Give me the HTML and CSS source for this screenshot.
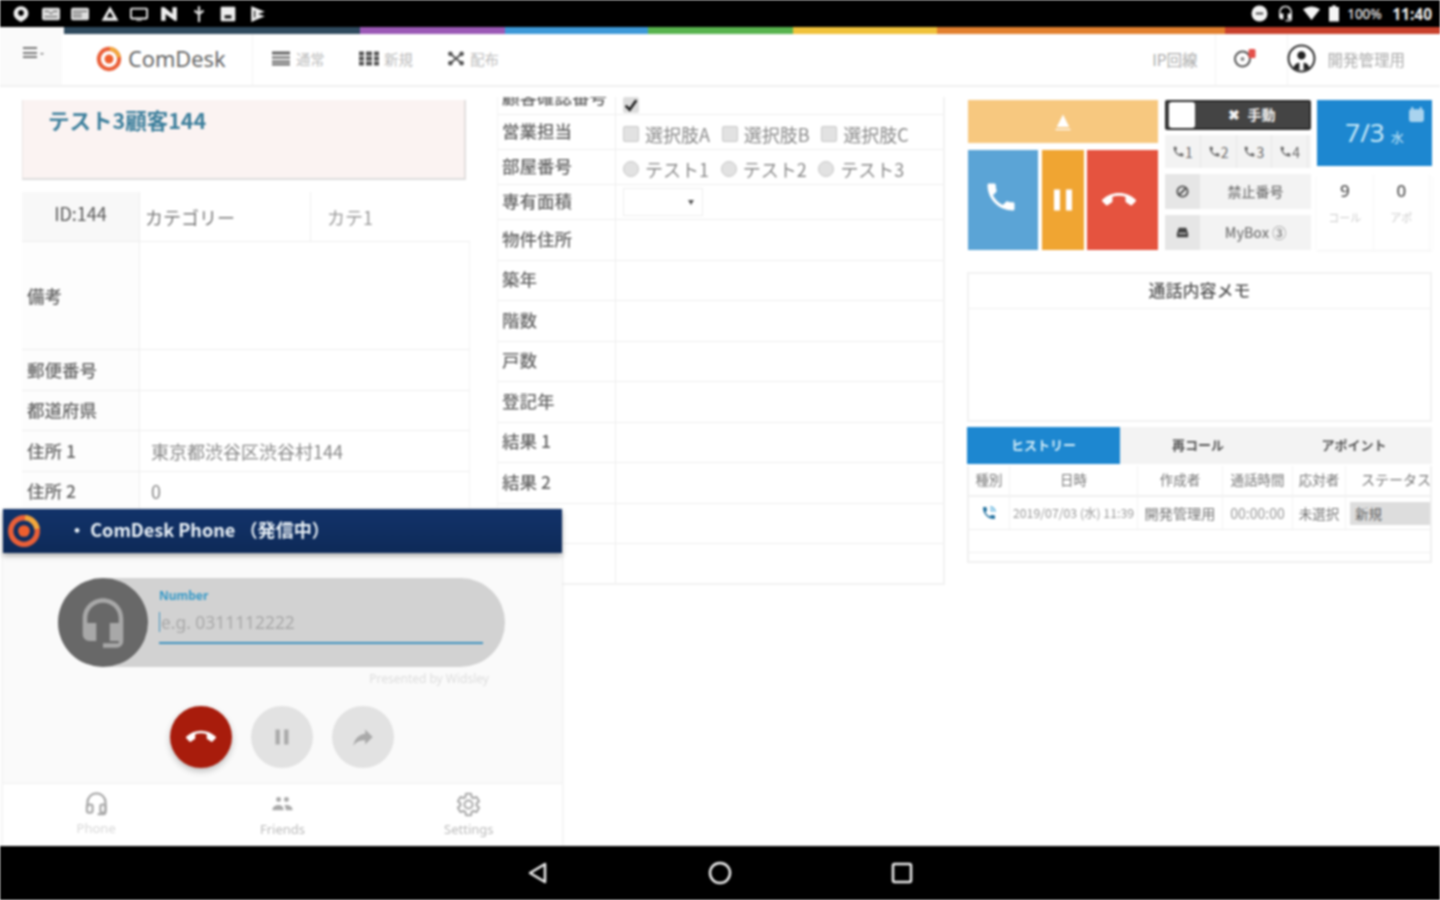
FILE: index.html
```html
<!DOCTYPE html>
<html lang="ja">
<head>
<meta charset="utf-8">
<title>ComDesk</title>
<link rel="stylesheet" href="styles.css">
</head>
<body>
<svg class="defs" width="0" height="0" aria-hidden="true">
  <symbol id="i-call" viewBox="0 0 24 24"><path d="M6.62 10.79c1.44 2.83 3.76 5.14 6.59 6.59l2.2-2.2c.27-.27.67-.36 1.02-.24 1.12.37 2.33.57 3.57.57.55 0 1 .45 1 1V20c0 .55-.45 1-1 1-9.39 0-17-7.61-17-17 0-.55.45-1 1-1h3.5c.55 0 1 .45 1 1 0 1.25.2 2.45.57 3.57.11.35.03.74-.25 1.02l-2.2 2.2z"/></symbol>
  <symbol id="i-end" viewBox="0 0 24 24"><path d="M12 9c-1.6 0-3.15.25-4.6.72v3.1c0 .39-.23.74-.56.9-.98.49-1.87 1.12-2.66 1.85-.18.18-.43.28-.7.28-.28 0-.53-.11-.71-.29L.29 13.08c-.18-.17-.29-.42-.29-.7 0-.28.11-.53.29-.71C3.34 8.78 7.46 7 12 7s8.66 1.78 11.71 4.67c.18.18.29.43.29.71 0 .28-.11.53-.29.71l-2.48 2.48c-.18.18-.43.29-.71.29-.27 0-.52-.11-.7-.28-.79-.74-1.69-1.36-2.67-1.85-.33-.16-.56-.5-.56-.9v-3.1C15.15 9.25 13.6 9 12 9z"/></symbol>
  <symbol id="i-headset" viewBox="0 0 24 24"><path d="M12 1c-4.97 0-9 4.03-9 9v7c0 1.66 1.34 3 3 3h3v-8H5v-2c0-3.87 3.13-7 7-7s7 3.13 7 7v2h-4v8h4v1h-7v2h6c1.66 0 3-1.34 3-3V10c0-4.97-4.03-9-9-9z"/></symbol>
  <symbol id="i-headset-o" viewBox="0 0 24 24"><path d="M4 15v-4a8 8 0 0 1 16 0v8c0 1.500-1 2.500-2.500 2.500H13" fill="none" stroke-width="2"/><rect x="3.500" y="13" width="5" height="7" rx="1.500" fill="none" stroke-width="2"/><rect x="15.500" y="13" width="4.500" height="7" rx="1.500" fill="none" stroke-width="2"/></symbol>
  <symbol id="i-people" viewBox="0 0 24 24"><circle cx="8.500" cy="7.500" r="2.200"/><circle cx="15.500" cy="7.500" r="2.200"/><path d="M3 17c0-3 3-4.500 5.500-4.500S13 14 13 17zM15 17c0-2-.6-3.300-1.500-4.200.7-.2 1.400-.3 2-.3 2.500 0 5.500 1.500 5.500 4.500z"/></symbol>
  <symbol id="i-gear" viewBox="0 0 24 24"><path d="M19.140 12.940c.04-.3.06-.61.06-.94 0-.32-.02-.64-.07-.94l2.030-1.580c.18-.14.23-.41.12-.61l-1.920-3.320c-.12-.22-.37-.29-.59-.22l-2.390.96c-.5-.38-1.030-.7-1.620-.94l-.36-2.540c-.04-.24-.24-.41-.48-.41h-3.840c-.24 0-.43.17-.47.41l-.36 2.540c-.59.24-1.130.57-1.620.94l-2.390-.96c-.22-.08-.47 0-.59.22L2.740 8.870c-.12.21-.08.47.12.61l2.030 1.580c-.05.3-.09.63-.09.94s.02.64.07.94l-2.030 1.580c-.18.14-.23.41-.12.61l1.920 3.320c.12.22.37.29.59.22l2.390-.96c.5.38 1.030.7 1.620.94l.36 2.540c.05.24.24.41.48.41h3.840c.24 0 .44-.17.47-.41l.36-2.540c.59-.24 1.130-.56 1.620-.94l2.390.96c.22.08.47 0 .59-.22l1.920-3.320c.12-.22.07-.47-.12-.61l-2.010-1.580zM12 15.600c-1.980 0-3.600-1.620-3.600-3.600s1.620-3.600 3.600-3.600 3.600 1.620 3.600 3.600-1.620 3.600-3.600 3.600z"/></symbol>
  <symbol id="i-forward" viewBox="0 0 24 24"><path d="M14 9V5l7 7-7 7v-4.100c-5 0-8.500 1.600-11 5.100 1-5 4-10 11-11z"/></symbol>
  <symbol id="i-pause" viewBox="0 0 24 24"><path d="M6 5h4v14H6zM14 5h4v14h-4z"/></symbol>
  <symbol id="i-logo" viewBox="0 0 32 32"><circle cx="16" cy="16" r="12.500" fill="none" stroke="#ea5f38" stroke-width="5"/><path d="M17 3.500a12.500 12.500 0 0 1 11.300 10.500" fill="none" stroke="#f2a83c" stroke-width="5"/><circle cx="16" cy="16" r="5.500" fill="#ee5f2e"/></symbol>
</svg>

<div class="screen">
  <header class="statusbar">
    <div class="status-left">
      <svg class="st" viewBox="0 0 16 16"><path d="M8 1a6.500 6.500 0 0 0-6.500 6.500C1.500 11 4 13 8 15c4-2 6.500-4 6.500-7.500A6.500 6.500 0 0 0 8 1z" fill="#eee"/><circle cx="8" cy="7" r="2.500" fill="#000"/></svg>
      <svg class="st" viewBox="0 0 20 16"><rect x="0" y="1" width="20" height="14" rx="2" fill="#ddd"/><path d="M3 5h4l3 3 3-3h4M3 11h14" stroke="#444" fill="none"/></svg>
      <svg class="st" viewBox="0 0 20 16"><rect x="0" y="1" width="20" height="14" rx="2" fill="#ddd"/><path d="M2 5h16M2 8h10M2 11h10" stroke="#444" fill="none"/></svg>
      <svg class="st" viewBox="0 0 16 16"><path d="M8 1l7.500 13H.5z" fill="#eee"/><path d="M8 6l3 5H5z" fill="#000"/></svg>
      <svg class="st" viewBox="0 0 20 16"><rect x="1" y="2" width="18" height="11" rx="1" fill="none" stroke="#eee" stroke-width="2"/><path d="M7 15h6" stroke="#eee"/></svg>
      <svg class="st" viewBox="0 0 16 16"><path d="M1 2h3l7 6V2h4v12h-2L5 8v6H1z" fill="#eee"/></svg>
      <svg class="st" viewBox="0 0 16 16"><path d="M8 1v14M4 5l4 3 4-3" stroke="#ddd" stroke-width="2" fill="none"/></svg>
      <svg class="st" viewBox="0 0 16 16"><rect x="1.500" y="1.500" width="13" height="13" rx="1" fill="#eee"/><rect x="5" y="9" width="6" height="3" fill="#222"/></svg>
      <svg class="st" viewBox="0 0 16 16"><path d="M2 1l12 5-6 2 6 2-12 5z" fill="#eee"/><path d="M5 5v6" stroke="#000"/></svg>
    </div>
    <div class="status-right">
      <svg class="st-r" viewBox="0 0 16 16"><circle cx="8" cy="8" r="7.500" fill="#f4f4f4"/><rect x="4.500" y="7" width="7" height="2" fill="#555"/></svg>
      <svg class="st-r" viewBox="0 0 24 24"><use href="#i-headset" fill="#f4f4f4"/></svg>
      <svg class="st-r" viewBox="0 0 16 16"><path d="M0 4q8-5 16 0L8 14z" fill="#f4f4f4"/></svg>
      <svg class="st-batt" viewBox="0 0 10 16"><path d="M3 0h4v1.500h3V16H0V1.500h3z" fill="#f4f4f4"/></svg>
      <span class="pct">100%</span>
      <span class="clock">11:40</span>
    </div>
  </header>

  <div class="rainbow">
    <i class="rb rb-blank"></i><i class="rb rb-navy"></i><i class="rb rb-purple"></i><i class="rb rb-blue"></i><i class="rb rb-green"></i><i class="rb rb-yellow"></i><i class="rb rb-orange"></i><i class="rb rb-red"></i>
  </div>

  <nav class="topnav">
    <div class="menu-btn"><span class="burger"></span><span class="caret"></span></div>
    <div class="brand">
      <svg class="brand-logo" viewBox="0 0 32 32"><use href="#i-logo"/></svg>
      <span class="brand-name">ComDesk</span>
    </div>
    <div class="nav-item nav-first">
      <svg class="nav-ic" viewBox="0 0 18 14"><path d="M0 0h18v3H0zM0 5h18v2H0zM0 9h18v2H0zM0 12h18v2H0z" fill="#666"/></svg><span>通常</span>
    </div>
    <div class="nav-item">
      <svg class="nav-ic nav-ic-wide" viewBox="0 0 20 14"><path d="M0 0h5v4H0zM7 0h6v4H7zM15 0h5v4h-5zM0 5h5v4H0zM7 5h6v4H7zM15 5h5v4h-5zM0 10h5v4H0zM7 10h6v4H7zM15 10h5v4h-5z" fill="#555"/></svg><span>新規</span>
    </div>
    <div class="nav-item">
      <svg class="nav-ic" viewBox="0 0 18 16"><path d="M3 3l12 10M15 3L3 13" stroke="#555" stroke-width="2"/><circle cx="3" cy="3" r="2.500" fill="#555"/><circle cx="15" cy="3" r="2.500" fill="#555"/><circle cx="3" cy="13" r="2.500" fill="#555"/><circle cx="15" cy="13" r="2.500" fill="#555"/></svg><span>配布</span>
    </div>
    <div class="nav-right">
      <div class="nav-cell nav-ip"><span>IP回線</span></div>
      <div class="nav-cell nav-bell">
        <svg class="bell" viewBox="0 0 24 20"><circle cx="9" cy="11" r="7.500" fill="none" stroke="#555" stroke-width="2"/><circle cx="9" cy="11" r="2" fill="#888"/><rect x="15" y="1" width="7" height="9" rx="1.500" fill="#e4504a"/></svg>
      </div>
      <div class="nav-user">
        <svg class="avatar" viewBox="0 0 28 28"><circle cx="14" cy="14" r="12.500" fill="#fff" stroke="#333" stroke-width="2"/><circle cx="14" cy="11" r="4" fill="#222"/><path d="M6 24c1-5 4-6 6-6v7zM22 24c-1-5-4-6-6-6v7z" fill="#222"/></svg>
        <span>開発管理用</span>
      </div>
    </div>
  </nav>

  <main class="content">
    <section class="col-left">
      <div class="customer-card"><h1>テスト3顧客144</h1></div>
      <div class="info-table">
        <div class="info-row row-id">
          <div class="cell-label cell-id">ID:144</div>
          <div class="cell-cat">カテゴリー</div>
          <div class="cell-val">カテ1</div>
        </div>
        <div class="info-row row-note"><div class="cell-label">備考</div><div class="cell-wide"></div></div>
        <div class="info-row"><div class="cell-label">郵便番号</div><div class="cell-wide"></div></div>
        <div class="info-row"><div class="cell-label">都道府県</div><div class="cell-wide"></div></div>
        <div class="info-row"><div class="cell-label">住所 1</div><div class="cell-wide cell-addr">東京都渋谷区渋谷村144</div></div>
        <div class="info-row"><div class="cell-label">住所 2</div><div class="cell-wide cell-addr">0</div></div>
      </div>
    </section>

    <section class="col-mid">
      <div class="form-clip">
        <div class="form-table">
          <div class="form-row row-a"><div class="form-label">顧客確認番号</div><div class="form-val"><span class="check"><svg viewBox="0 0 12 12"><path d="M2 6.500l3 3 5-7" stroke="#222" stroke-width="2" fill="none"/></svg></span></div></div>
          <div class="form-row row-b"><div class="form-label">営業担当</div><div class="form-val opts"><span class="opt"><i class="box"></i>選択肢A</span><span class="opt"><i class="box"></i>選択肢B</span><span class="opt"><i class="box"></i>選択肢C</span></div></div>
          <div class="form-row row-b"><div class="form-label">部屋番号</div><div class="form-val opts"><span class="opt"><i class="box radio"></i>テスト1</span><span class="opt"><i class="box radio"></i>テスト2</span><span class="opt"><i class="box radio"></i>テスト3</span></div></div>
          <div class="form-row row-b"><div class="form-label">専有面積</div><div class="form-val"><span class="select"><i class="arrow"></i></span></div></div>
          <div class="form-row"><div class="form-label">物件住所</div><div class="form-val"></div></div>
          <div class="form-row"><div class="form-label">築年</div><div class="form-val"></div></div>
          <div class="form-row"><div class="form-label">階数</div><div class="form-val"></div></div>
          <div class="form-row"><div class="form-label">戸数</div><div class="form-val"></div></div>
          <div class="form-row"><div class="form-label">登記年</div><div class="form-val"></div></div>
          <div class="form-row"><div class="form-label">結果 1</div><div class="form-val"></div></div>
          <div class="form-row"><div class="form-label">結果 2</div><div class="form-val"></div></div>
          <div class="form-row"><div class="form-label"></div><div class="form-val"></div></div>
          <div class="form-row"><div class="form-label"></div><div class="form-val"></div></div>
        </div>
      </div>
    </section>

    <section class="col-right">
      <div class="widgets">
        <div class="call-btns">
          <div class="btn-up"><svg viewBox="0 0 16 16"><path d="M8 2l5 10H3z" fill="#fff"/><path d="M2 14h12" stroke="#fff"/></svg></div>
          <div class="btn-row">
            <div class="btn-call"><svg viewBox="0 0 24 24"><use href="#i-call" fill="#fff"/></svg></div>
            <div class="btn-hold"><svg viewBox="0 0 24 24"><use href="#i-pause" fill="#fff"/></svg></div>
            <div class="btn-end"><svg viewBox="0 0 24 24"><use href="#i-end" fill="#fff"/></svg></div>
          </div>
        </div>
        <div class="ctl">
          <div class="toggle"><span class="toggle-knob"></span><span class="toggle-txt">✖ 手動</span></div>
          <div class="lines">
            <span><svg viewBox="0 0 24 24"><use href="#i-call"/></svg>1</span>
            <span><svg viewBox="0 0 24 24"><use href="#i-call"/></svg>2</span>
            <span><svg viewBox="0 0 24 24"><use href="#i-call"/></svg>3</span>
            <span><svg viewBox="0 0 24 24"><use href="#i-call"/></svg>4</span>
          </div>
          <div class="ctl-btn">
            <span class="ctl-ic"><svg viewBox="0 0 16 16"><circle cx="8" cy="8" r="5.500" fill="none" stroke="#555" stroke-width="2"/><path d="M4 12l8-8" stroke="#555" stroke-width="2"/></svg></span>
            <span class="ctl-txt">禁止番号</span>
          </div>
          <div class="ctl-btn">
            <span class="ctl-ic"><svg viewBox="0 0 16 16"><path d="M2 9l2-6h8l2 6v4H2z" fill="#444"/><path d="M4 9h8" stroke="#fff"/></svg></span>
            <span class="ctl-txt">MyBox ③</span>
          </div>
        </div>
        <div class="stats">
          <div class="date-box">
            <svg class="cal" viewBox="0 0 16 16"><rect x="1" y="3" width="14" height="12" rx="2" fill="#a9d3ee"/><path d="M4 1v3M12 1v3" stroke="#a9d3ee" stroke-width="2"/></svg>
            <span class="date">7/3</span><span class="dow">水</span>
          </div>
          <div class="counts">
            <div class="count"><b>9</b><small>コール</small></div>
            <div class="count"><b>0</b><small>アポ</small></div>
          </div>
        </div>
      </div>

      <div class="memo">
        <div class="memo-head">通話内容メモ</div>
        <div class="memo-body"></div>
      </div>

      <div class="tabs">
        <div class="tab tab-on">ヒストリー</div>
        <div class="tab">再コール</div>
        <div class="tab">アポイント</div>
      </div>
      <div class="history">
        <div class="h-row h-head">
          <span>種別</span><span>日時</span><span>作成者</span><span>通話時間</span><span>応対者</span><span class="h-last">ステータス</span>
        </div>
        <div class="h-row h-data">
          <span><svg class="h-ic" viewBox="0 0 24 24"><use href="#i-call"/><path d="M14 3a7 7 0 0 1 7 7M14 7a3 3 0 0 1 3 3" fill="none" stroke="#3aa0d6" stroke-width="2"/></svg></span><span class="h-date">2019/07/03 (水) 11:39</span><span class="h-name">開発管理用</span><span class="h-time">00:00:00</span><span>未選択</span><span class="h-status"><em>新規</em></span>
        </div>
        <div class="h-empty"></div>
      </div>
    </section>

    <aside class="phone">
      <div class="phone-head">
        <svg class="phone-logo" viewBox="0 0 32 32"><use href="#i-logo"/></svg>
        <span class="phone-title">・ ComDesk Phone （発信中）</span>
      </div>
      <div class="phone-body">
        <div class="pill">
          <div class="pill-avatar"><svg viewBox="0 0 24 24"><use href="#i-headset"/></svg></div>
          <div class="pill-field">
            <label>Number</label>
            <div class="pill-input"><i class="cursor"></i>e.g. 0311112222</div>
          </div>
        </div>
        <div class="presented">Presented by Widsley</div>
        <div class="phone-actions">
          <div class="round round-end"><svg viewBox="0 0 24 24"><use href="#i-end"/></svg></div>
          <div class="round"><svg viewBox="0 0 24 24"><use href="#i-pause"/></svg></div>
          <div class="round"><svg viewBox="0 0 24 24"><use href="#i-forward"/></svg></div>
        </div>
      </div>
      <div class="phone-tabs">
        <div class="p-tab p-tab-first"><svg class="p-outline" viewBox="0 0 24 24"><use href="#i-headset-o"/></svg><span>Phone</span></div>
        <div class="p-tab"><svg viewBox="0 0 24 24"><use href="#i-people"/></svg><span>Friends</span></div>
        <div class="p-tab"><svg class="p-outline" viewBox="0 0 24 24"><use href="#i-gear"/></svg><span>Settings</span></div>
      </div>
    </aside>
  </main>

  <footer class="navbar">
    <svg class="nb" viewBox="0 0 24 24"><path d="M19 3v18L4 12z" fill="none" stroke="#eee" stroke-width="2.500" stroke-linejoin="round"/></svg>
    <svg class="nb" viewBox="0 0 24 24"><circle cx="12" cy="12" r="10" fill="none" stroke="#eee" stroke-width="2.500"/></svg>
    <svg class="nb" viewBox="0 0 24 24"><rect x="3" y="3" width="18" height="18" rx="1.500" fill="none" stroke="#eee" stroke-width="2.500"/></svg>
  </footer>
</div>
</body>
</html>
```

FILE: styles.css
```css
* { box-sizing: border-box; }
html, body { margin: 0; padding: 0; height: 100%; overflow: hidden; background: #fff; }
body { font-family: "Noto Sans CJK JP", "Noto Sans", "Liberation Sans", sans-serif; color: #555; }
.defs { display: block; height: 0; }

.screen { width: 1440px; height: 900px; display: flex; flex-direction: column; filter: blur(0.85px); }

/* status bar */
.statusbar { height: 27px; flex: none; background: #000; display: flex; justify-content: space-between; align-items: center; }
.status-left { display: flex; gap: 11.600px; padding-left: 12px; }
.st { width: 18px; height: 18px; display: block; }
.status-right { display: flex; align-items: center; padding-right: 8px; color: #eee; }
.st-r { width: 17px; height: 17px; margin-right: 9px; display: block; }
.st-batt { width: 10px; height: 17px; margin: 0 8px 0 0; display: block; }
.pct { font: 500 13.500px "Noto Sans", sans-serif; width: 45px; }
.clock { font: 700 15.500px "Noto Sans", sans-serif; }

.rainbow { height: 7px; flex: none; display: flex; }
.rb { display: block; height: 100%; }
.rb-blank { width: 64px; background: #fafafa; }
.rb-navy { width: 296px; background: #2f4a5e; }
.rb-purple { width: 145px; background: #9b59b6; }
.rb-blue { width: 143px; background: #3d99d8; }
.rb-green { width: 145px; background: #58b44e; }
.rb-yellow { width: 144px; background: #f0c23a; }
.rb-orange { width: 288px; background: #e2802e; }
.rb-red { flex: 1; background: #c8412c; }

/* top nav */
.topnav { height: 53px; flex: none; display: flex; align-items: center; background: #fff; border-bottom: 2px solid #f0f0f0; }
.menu-btn { width: 62px; height: 100%; background: #fafafa; display: flex; padding: 13px 0 0 23px; gap: 3px; }
.burger { width: 14px; height: 11px; border-top: 2px solid #777; border-bottom: 2px solid #777; background: linear-gradient(#777, #777) center / 100% 2px no-repeat; }
.caret { margin-top: 6px; border: 2.500px solid transparent; border-top-color: #777; height: 0; }
.brand { width: 191px; height: 100%; display: flex; align-items: center; padding: 0 0 2px 34px; gap: 6px; border-right: 1px solid #f2f2f2; }
.brand-logo { width: 26px; height: 26px; }
.brand-name { font: 21.800px "Noto Sans", sans-serif; color: #666; }
.nav-item { display: flex; align-items: center; gap: 5px; font-size: 14.300px; color: #bbb; margin-left: 34.500px; padding-bottom: 2px; }
.nav-first { margin-left: 19px; gap: 6px; }
.nav-ic { width: 18px; height: 15px; }
.nav-ic-wide { width: 20px; }
.nav-right { margin-left: auto; display: flex; align-items: center; height: 100%; }
.nav-cell { height: 100%; display: flex; align-items: center; border-right: 1px solid #f4f4f4; }
.nav-ip { font-size: 15.500px; color: #aaa; padding: 0 18px 2px 0; }
.nav-bell { padding: 0 29px 4px 17px; }
.bell { width: 25px; height: 20px; display: block; }
.nav-user { display: flex; align-items: center; gap: 11px; padding: 0 35px 2px 0; margin-left: -1px; font-size: 15.500px; color: #aaa; }
.avatar { width: 29px; height: 29px; }

/* content */
.content { flex: 1; position: relative; display: grid; grid-template-columns: 475px 470px 465px; padding: 0 8px 0 22px; background: #fff; overflow: hidden; }

.col-left { padding-top: 13px; width: 448px; }
.customer-card { height: 80px; width: 444px; background: #fbf3f2; border: 1px solid #e8e4e3; border-top: none; border-bottom: 2px solid #ddd; border-right: 2px solid #e2dfde; padding: 5px 0 0 25px; }
.customer-card h1 { margin: 0; font-size: 21.500px; font-weight: 700; line-height: 30px; color: #3d7f9c; white-space: nowrap; }
.info-table { margin-top: 12px; }
.info-row { height: 40.500px; display: grid; grid-template-columns: 118px 1fr; border-bottom: 1px solid #eee; align-items: stretch; font-size: 17.500px; font-weight: 500; color: #666; }
.row-id { height: 50px; grid-template-columns: 118px 171px 1fr; }
.row-note { height: 108px; }
.cell-label { display: flex; align-items: center; padding: 0 0 1px 5px; background: #fdfdfd; border-right: 1px solid #eee; white-space: nowrap; }
.cell-id { justify-content: center; background: #f8f8f8; padding: 0 0 7px; color: #555; font-size: 18px; font-weight: 400; }
.cell-cat { display: flex; align-items: center; padding-left: 5px; border-right: 1px solid #f0f0f0; color: #777; font-size: 18px; font-weight: 400; }
.cell-val { display: flex; align-items: center; padding-left: 16px; color: #999; font-size: 18px; font-weight: 400; }
.cell-wide { border-right: 1px solid #f4f4f4; }
.cell-addr { display: flex; align-items: center; padding-left: 11px; color: #888; font-size: 18px; font-weight: 400; }

.col-mid { padding-top: 10px; width: 448px; }
.form-clip { height: 488px; overflow: hidden; border-bottom: 2px solid #f2f2f2; border-right: 2px solid #f2f2f2; border-left: 1px solid #f4f4f4; }
.form-table { margin-top: -22px; }
.form-row { height: 40.500px; display: grid; grid-template-columns: 118px 1fr; border-bottom: 1px solid #eee; font-size: 17.500px; font-weight: 500; color: #666; }
.row-a { height: 40px; }
.row-b { height: 35px; }
.form-label { display: flex; align-items: center; padding: 0 0 3px 4px; border-right: 1px solid #eee; white-space: nowrap; overflow: hidden; }
.row-a .form-label { padding: 3px 0 0 4px; }
.form-val { display: flex; align-items: center; padding-left: 7px; }
.check { width: 16px; height: 16px; background: #ddd; border-radius: 2px; margin-top: 20px; display: block; }
.check svg { width: 16px; height: 16px; display: block; }
.opts { gap: 11.700px; font-size: 18px; font-weight: 400; color: #888; padding-top: 3px; }
.opt { display: flex; align-items: center; gap: 6px; white-space: nowrap; }
.box { width: 16px; height: 16px; background: #e2e2e2; border: 1px solid #c8c8c8; border-radius: 2px; display: block; }
.radio { border-radius: 50%; }
.select { width: 80px; height: 28px; border: 1px solid #eee; display: flex; align-items: center; justify-content: flex-end; padding-right: 8px; }
.arrow { border: 3.500px solid transparent; border-top: 5px solid #555; border-bottom: none; display: block; }

.col-right { padding-top: 13px; width: 465px; }
.widgets { display: flex; height: 150px; }
.call-btns { width: 190px; margin-left: 1px; display: flex; flex-direction: column; gap: 7px; }
.btn-up { height: 43px; background: #f7c87f; display: flex; align-items: center; justify-content: center; }
.btn-up svg { width: 20px; height: 20px; }
.btn-row { flex: 1; display: flex; justify-content: space-between; }
.btn-row > div { display: flex; align-items: center; justify-content: center; }
.btn-call { width: 70px; background: #5ba4d6; }
.btn-call svg { width: 36px; height: 36px; margin: 0 4px 6px 0; }
.btn-hold { width: 42px; margin-left: 3px; background: #f0a532; }
.btn-hold svg { width: 36px; height: 36px; }
.btn-end { width: 71px; margin-left: 3px; background: #e5533f; }
.btn-end svg { width: 34px; height: 34px; margin-right: 8px; }

.ctl { width: 146px; margin-left: 7px; display: flex; flex-direction: column; }
.toggle { height: 30px; background: #444; border-radius: 2px; border: 2px solid #2a2a2a; display: flex; align-items: center; padding-left: 2px; }
.toggle-knob { width: 26px; height: 26px; background: #fff; border-radius: 3px; flex: none; }
.toggle-txt { flex: 1; text-align: center; color: #f2f2f2; font-size: 14px; font-weight: 700; padding: 0 0 3px 0; word-spacing: 4px; }
.lines { height: 33px; margin-top: 5px; padding-right: 3px; display: grid; grid-template-columns: repeat(4, 1fr); background: #f3f3f3; }
.lines span { display: flex; align-items: center; justify-content: center; font-size: 14px; color: #666; border-right: 1px solid #e8e8e8; }
.lines svg { width: 13px; height: 13px; fill: #666; }
.ctl-btn { height: 35px; margin-top: 6px; display: flex; background: #f3f3f3; font-size: 14px; color: #777; }
.ctl-ic { width: 35px; background: #e6e6e6; display: flex; align-items: center; justify-content: center; }
.ctl-ic svg { width: 15px; height: 15px; }
.ctl-txt { flex: 1; display: flex; align-items: center; justify-content: center; font-weight: 500; white-space: nowrap; padding-bottom: 2px; }

.stats { width: 115px; margin-left: 6px; display: flex; flex-direction: column; }
.date-box { position: relative; height: 66px; background: #1d87d0; color: #c6e8f8; display: flex; align-items: center; justify-content: center; gap: 6px; padding-bottom: 2px; }
.date { font: 26px "Noto Sans", sans-serif; }
.dow { font-size: 13px; margin-top: 8px; }
.cal { position: absolute; top: 6px; right: 7px; width: 17px; height: 17px; }
.counts { flex: 1; margin-top: 9px; padding-right: 2px; display: grid; grid-template-columns: 1fr 1fr; box-shadow: 0 1px 2px #f0f0f0; }
.count { display: flex; flex-direction: column; align-items: center; padding-top: 4px; border-right: 1px solid #f6f6f6; }
.count b { font: 500 17px "Noto Sans", sans-serif; color: #555; line-height: 24px; }
.count small { font-size: 11px; color: #ccc; line-height: 18px; margin-top: 5px; }

.memo { margin-top: 22px; height: 150px; border: 2px solid #f2f2f2; }
.memo-head { height: 35px; border-bottom: 1px solid #f0f0f0; text-align: center; font-size: 17px; font-weight: 500; color: #555; line-height: 31px; }
.tabs { margin-top: 5px; height: 37px; display: grid; grid-template-columns: 153px 1fr 1fr; background: #f3f3f3; }
.tab { display: flex; align-items: center; justify-content: center; font-size: 13px; font-weight: 700; color: #555; padding-bottom: 2px; }
.tab-on { background: #1d87d0; color: #d6eef8; }
.history { margin-top: 2px; border: 2px solid #f0f0f0; border-top: none; height: 97px; overflow: hidden; }
.h-row { display: grid; grid-template-columns: 41px 128px 85px 70px 53px 86px; white-space: nowrap; overflow: hidden; }
.h-row span { display: flex; align-items: center; justify-content: center; border-right: 1px solid #f2f2f2; overflow: hidden; font-size: 13.500px; color: #777; }
.h-head { height: 31px; border-bottom: 2px solid #f0f0f0; }
.h-head span { padding-bottom: 4px; }
.h-row .h-last { justify-content: flex-start; padding-left: 15px; border-right: none; font-size: 14px; }
.h-data { height: 33px; border-bottom: 1px solid #eee; }
.h-ic { width: 16px; height: 16px; fill: #1f6f9e; }
.h-data .h-date { font-size: 12.300px; color: #999; }
.h-data .h-name { font-size: 14.200px; }
.h-data .h-time { font-size: 14px; color: #999; }
.h-data .h-status { justify-content: flex-start; padding: 4px 0 4px 4px; border-right: none; }
.h-status em { font-style: normal; display: block; width: 100%; background: #ddd; padding-left: 5px; line-height: 23px; color: #666; }
.h-empty { height: 23px; border-bottom: 1px solid #f0f0f0; }

/* softphone overlay */
.phone { position: absolute; left: 3px; top: 422px; width: 559px; height: 337px; display: flex; flex-direction: column; background: #fafafa; box-shadow: 0 0 3px #ddd; }
.phone-head { height: 44px; flex: none; background: linear-gradient(#12336a, #0e2a58); box-shadow: 0 3px 5px rgba(0,0,0,.3); display: flex; align-items: center; color: #e8f0f6; font-size: 18.100px; font-weight: 700; }
.phone-logo { width: 34px; height: 34px; margin-left: 4px; }
.phone-title { margin: 0 0 4px 27px; white-space: nowrap; }
.phone-body { flex: 1; padding-top: 25px; }
.pill { margin-left: 55px; width: 447px; height: 89px; border-radius: 45px; background: #d2d2d2; display: flex; }
.pill-avatar { width: 90px; height: 89px; border-radius: 50%; background: #686868; display: flex; align-items: center; justify-content: center; flex: none; }
.pill-avatar svg { width: 54px; height: 54px; fill: #a8a8a8; }
.pill-field { margin-left: 11px; width: 324px; display: flex; flex-direction: column; }
.pill-field label { font: 700 12px "Noto Sans", sans-serif; color: #3a9bc8; margin-top: 10px; line-height: 16px; }
.pill-input { margin-top: 8px; height: 32px; border-bottom: 2px solid #3f93c0; font: 17.400px "Noto Sans", sans-serif; color: #a8a8a8; display: flex; align-items: center; padding-bottom: 11px; }
.cursor { width: 1px; height: 20px; background: #3f93c0; margin-right: 1px; display: block; }
.presented { margin: 4px 73px 0 0; text-align: right; font: 12px "Noto Sans", sans-serif; color: #ddd; line-height: 16px; }
.phone-actions { margin-top: 19px; margin-left: 167px; display: flex; gap: 19px; }
.round { width: 62px; height: 62px; border-radius: 50%; background: #e2e2e2; display: flex; align-items: center; justify-content: center; }
.round svg { width: 26px; height: 26px; fill: #aaa; }
.round-end { background: #a81c0c; box-shadow: 0 3px 6px rgba(0,0,0,.25); }
.round-end svg { width: 30px; height: 30px; fill: #fff; }
.phone-tabs { height: 63px; flex: none; background: #fff; display: grid; grid-template-columns: repeat(3, 1fr); border-top: 1px solid #f0f0f0; }
.p-tab { display: flex; flex-direction: column; align-items: center; padding-top: 7px; color: #bbb; font: 13px "Noto Sans", sans-serif; }
.p-tab svg { width: 27px; height: 27px; fill: #aaa; }
.p-tab .p-outline { fill: none; stroke: #aaa; stroke-width: 1.800; }
.p-tab span { line-height: 18px; margin-top: 2px; }
.p-tab-first { color: #d8d8d8; padding-top: 6px; }

/* android nav */
.navbar { height: 54px; flex: none; background: #000; display: grid; grid-template-columns: repeat(3, 24px); column-gap: 158px; justify-content: center; align-items: center; }
.nb { width: 24px; height: 24px; display: block; }
```
